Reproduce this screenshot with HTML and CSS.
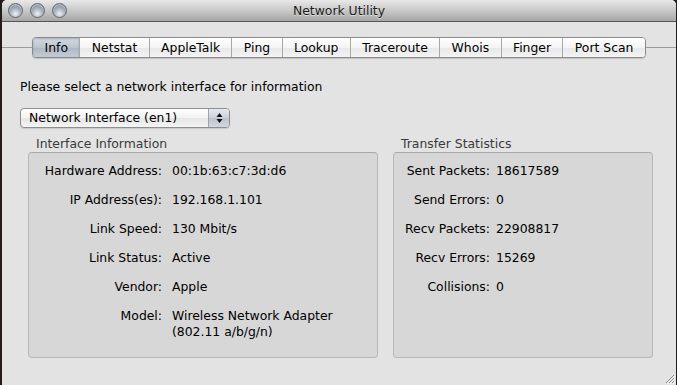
FILE: index.html
```html
<!DOCTYPE html>
<html lang="en">
<head>
    <meta charset="UTF-8">
    <title>Network Utility</title>
    <link rel="stylesheet" href="styles.css">
</head>
<body>
    <div class="window">
        <div class="titlebar">
            <div class="lights">
                <span class="light"></span>
                <span class="light"></span>
                <span class="light"></span>
            </div>
            <div class="title">Network Utility</div>
            <div></div>
        </div>

        <div class="content">
            <div class="tabstrip">
                <div class="rule"></div>
                <div class="tabs">
                    <button class="tab selected">Info</button>
                    <button class="tab">Netstat</button>
                    <button class="tab">AppleTalk</button>
                    <button class="tab">Ping</button>
                    <button class="tab">Lookup</button>
                    <button class="tab">Traceroute</button>
                    <button class="tab">Whois</button>
                    <button class="tab">Finger</button>
                    <button class="tab">Port Scan</button>
                </div>
                <div class="rule"></div>
            </div>

            <p class="prompt">Please select a network interface for information</p>

            <div class="popup">
                <span class="popup-label">Network Interface (en1)</span>
                <span class="popup-arrows">
                    <svg width="7" height="12" viewBox="0 0 7 12">
                        <path d="M3.5 1 L6.5 5 L0.5 5 Z" fill="#111"/>
                        <path d="M0.5 7 L6.5 7 L3.5 11 Z" fill="#111"/>
                    </svg>
                </span>
            </div>

            <div class="groups">
                <div class="group group-info">
                    <div class="group-title">Interface Information</div>
                    <div class="box">
                        <div class="rows">
                            <span class="label">Hardware Address:</span><span class="value">00:1b:63:c7:3d:d6</span>
                            <span class="label">IP Address(es):</span><span class="value">192.168.1.101</span>
                            <span class="label">Link Speed:</span><span class="value">130 Mbit/s</span>
                            <span class="label">Link Status:</span><span class="value">Active</span>
                            <span class="label">Vendor:</span><span class="value">Apple</span>
                            <span class="label">Model:</span><span class="value">Wireless Network Adapter<br>(802.11 a/b/g/n)</span>
                        </div>
                    </div>
                </div>
                <div class="group group-stats">
                    <div class="group-title">Transfer Statistics</div>
                    <div class="box">
                        <div class="rows">
                            <span class="label">Sent Packets:</span><span class="value">18617589</span>
                            <span class="label">Send Errors:</span><span class="value">0</span>
                            <span class="label">Recv Packets:</span><span class="value">22908817</span>
                            <span class="label">Recv Errors:</span><span class="value">15269</span>
                            <span class="label">Collisions:</span><span class="value">0</span>
                        </div>
                    </div>
                </div>
            </div>
        </div>

        <svg class="grip" width="12" height="12" viewBox="0 0 12 12">
            <path d="M11 3 L3 11 M11 6 L6 11 M11 9 L9 11" stroke="#8a8a8a" stroke-width="1"/>
            <path d="M12 4 L4 12 M12 7 L7 12 M12 10 L10 12" stroke="#fafafa" stroke-width="1"/>
        </svg>
    </div>
</body>
</html>
```

FILE: styles.css
```css
html, body {
    margin: 0;
    padding: 0;
}

body {
    background-color: #231c18;
    font-family: 'DejaVu Sans', sans-serif;
    font-size: 12.4px;
    color: #000;
    width: 677px;
    height: 385px;
    overflow: hidden;
}

.window {
    position: relative;
    margin-left: 2px;
    width: 674px;
    height: 385px;
    background-color: #e3e3e3;
    border-radius: 5px 5px 0 0;
    overflow: hidden;
}

/* title bar */
.titlebar {
    display: grid;
    grid-template-columns: 1fr auto 1fr;
    align-items: center;
    height: 21px;
    border-bottom: 1px solid #565656;
    background: linear-gradient(#e9e9e9, #c8c8c8 50%, #a6a6a6);
}

.lights {
    display: flex;
    gap: 7px;
    padding-left: 6px;
}

.light {
    width: 13px;
    height: 13px;
    border-radius: 50%;
    border: 1px solid #5f6670;
    background: radial-gradient(circle at 50% 75%, #eef1f5 0, #aab2bd 45%, #6f7783 100%);
    box-shadow: inset 0 1px 1px rgba(255, 255, 255, 0.6);
}

.title {
    color: #1a1a1a;
    line-height: 21px;
    text-shadow: 0 1px 0 rgba(255, 255, 255, 0.5);
}

/* content */
.content {
    padding-top: 15px;
}

.tabstrip {
    display: flex;
    align-items: center;
}

.rule {
    flex: 1;
    height: 1px;
    background-color: #9c9c9c;
}

.tabs {
    display: flex;
    border: 1px solid #8b8b8b;
    border-radius: 4px;
    overflow: hidden;
    box-shadow: 0 1px 1px rgba(0, 0, 0, 0.15);
}

.tab {
    font-family: inherit;
    font-size: 12.4px;
    color: #000;
    height: 19px;
    padding: 0 11.4px;
    margin: 0;
    border: none;
    border-left: 1px solid #a8a8a8;
    background: linear-gradient(#ffffff, #f4f4f4 50%, #e8e8e8 51%, #f3f3f3);
}

.tab:first-child {
    border-left: none;
}

.tab.selected {
    background: linear-gradient(#d3d9e1, #bcc5d0 50%, #aeb8c5 51%, #c3cbd6);
    box-shadow: inset 0 1px 2px rgba(0, 0, 0, 0.2);
}

.prompt {
    margin: 21px 0 0 18px;
    line-height: 16px;
}

.popup {
    display: flex;
    margin: 13px 0 0 18px;
    width: 210px;
    height: 20px;
    box-sizing: border-box;
    border: 1px solid #8e8e8e;
    border-radius: 4px;
    overflow: hidden;
    background: linear-gradient(#ffffff, #f2f2f2 50%, #e6e6e6 51%, #f4f4f4);
    box-shadow: 0 1px 1px rgba(0, 0, 0, 0.12);
}

.popup-label {
    flex: 1;
    padding-left: 8px;
    line-height: 18px;
}

.popup-arrows {
    display: flex;
    align-items: center;
    justify-content: center;
    width: 20px;
    border-left: 1px solid #a3a3a3;
    background: linear-gradient(#e4e8ee, #ccd2da 50%, #bcc3cd 51%, #d2d8e0);
}

/* group boxes */
.groups {
    display: flex;
    gap: 15px;
    margin: 8px 0 0 26px;
}

.group-title {
    color: #3a3a3a;
    line-height: 16px;
    padding-left: 8px;
}

.box {
    height: 206px;
    box-sizing: border-box;
    border: 1px solid #b8b8b8;
    border-top-color: #a9a9a9;
    border-radius: 4px;
    background-color: #d7d7d7;
    padding-top: 10px;
}

.group-info .box {
    width: 350px;
}

.group-stats .box {
    width: 260px;
}

.rows {
    display: grid;
    row-gap: 13px;
    line-height: 16px;
}

.group-info .rows {
    grid-template-columns: 133px 1fr;
    column-gap: 10px;
}

.group-stats .rows {
    grid-template-columns: 96px 1fr;
    column-gap: 6px;
}

.label {
    text-align: right;
}

.grip {
    position: absolute;
    right: 1px;
    bottom: 1px;
}
```
